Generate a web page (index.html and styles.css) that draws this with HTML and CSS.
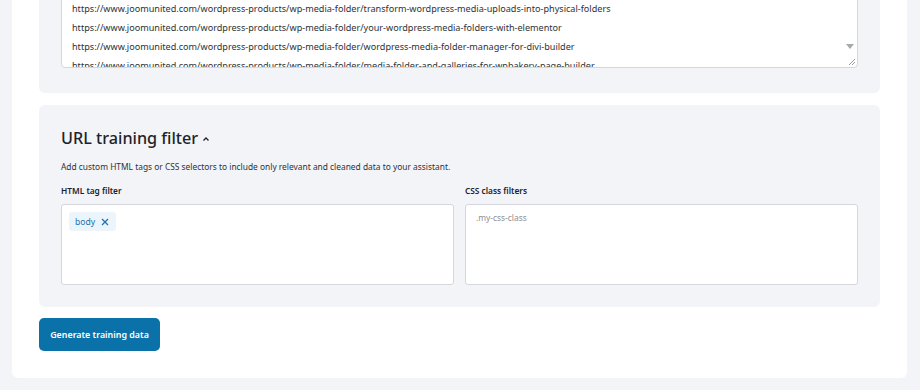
FILE: index.html
```html
<!DOCTYPE html>
<html>
<head>
<meta charset="utf-8">
<link rel="stylesheet" href="styles.css">
</head>
<body>
<div class="card">
  <section class="panel panel-urls">
    <div class="url-box">
      <div class="url-lines">
        <div class="url">https://www.joomunited.com/wordpress-products/wp-media-folder/transform-wordpress-media-uploads-into-physical-folders</div>
        <div class="url">https://www.joomunited.com/wordpress-products/wp-media-folder/your-wordpress-media-folders-with-elementor</div>
        <div class="url">https://www.joomunited.com/wordpress-products/wp-media-folder/wordpress-media-folder-manager-for-divi-builder</div>
        <div class="url">https://www.joomunited.com/wordpress-products/wp-media-folder/media-folder-and-galleries-for-wpbakery-page-builder</div>
      </div>
      <div class="scrollbar">
        <span class="arrow-down"></span>
        <svg class="grip" width="10" height="10" viewBox="0 0 10 10"><path d="M9 3 L3 9 M9 6 L6 9" stroke="#999" stroke-width="1"/></svg>
      </div>
    </div>
  </section>

  <section class="panel panel-filter">
    <h2 class="title">URL training filter <svg class="chev" width="8" height="6" viewBox="0 0 8 6"><path d="M1.5 4.5 L4 2 L6.5 4.5" fill="none" stroke="#1d2327" stroke-width="1.3"/></svg></h2>
    <p class="desc">Add custom HTML tags or CSS selectors to include only relevant and cleaned data to your assistant.</p>
    <div class="fields">
      <div class="field">
        <label class="label">HTML tag filter</label>
        <div class="input">
          <span class="chip">body <svg width="8" height="8" viewBox="0 0 8 8"><path d="M1 1 L7 7 M7 1 L1 7" stroke="#2271b1" stroke-width="1.3"/></svg></span>
        </div>
      </div>
      <div class="field">
        <label class="label">CSS class filters</label>
        <div class="input"><span class="placeholder">.my-css-class</span></div>
      </div>
    </div>
  </section>

  <button class="btn">Generate training data</button>
</div>
</body>
</html>
```
FILE: styles.css
```css
* { box-sizing: border-box; }
html, body { margin: 0; padding: 0; }
body {
  background: #f3f4f8;
  font-family: "Noto Sans", "Open Sans", sans-serif;
  color: #1d2327;
  width: 920px;
  height: 390px;
  overflow: hidden;
}
.card {
  margin: -30px 0 0 12px;
  width: 895px;
  background: #fff;
  border-radius: 0 0 6px 6px;
  padding: 0 27px 27px;
}
.panel {
  background: #f3f4f8;
  border-radius: 6px;
  padding: 22px 22px 25px;
}
.panel-urls { padding-bottom: 25px; }
.url-box {
  position: relative;
  height: 76px;
  background: #fff;
  border: 1px solid #d5d7dc;
  border-radius: 4px;
  overflow: hidden;
  padding: 6px 18px 0 10px;
}
.url {
  font-size: 9.1px;
  line-height: 19px;
  color: #2c3338;
  white-space: nowrap;
}
.scrollbar {
  position: absolute;
  right: 0;
  top: 0;
  bottom: 0;
  width: 14px;
}
.arrow-down {
  position: absolute;
  right: 3px;
  top: 51px;
  width: 0;
  height: 0;
  border-left: 4px solid transparent;
  border-right: 4px solid transparent;
  border-top: 5px solid #a7aaad;
}
.grip {
  position: absolute;
  right: 1px;
  bottom: 1px;
}
.panel-filter {
  margin-top: 12px;
  padding: 21px 22px 22px;
}
.title {
  margin: 0;
  font-size: 16.2px;
  font-weight: 500;
  line-height: 24px;
  display: flex;
  align-items: center;
  gap: 4px;
}
.chev { margin-top: 1px; }
.desc {
  margin: 11px 0 0;
  font-size: 8.4px;
  line-height: 12px;
  color: #2c3338;
}
.fields {
  display: grid;
  grid-template-columns: 1fr 1fr;
  gap: 11px;
  margin-top: 12px;
}
.label {
  display: block;
  font-size: 8.3px;
  font-weight: 600;
  line-height: 12px;
  color: #1d2327;
}
.input {
  margin-top: 7px;
  height: 81px;
  background: #fff;
  border: 1px solid #d5d7dc;
  border-radius: 3px;
  padding: 7px 7px;
  display: flex;
  align-items: flex-start;
}
.chip {
  display: inline-flex;
  align-items: center;
  gap: 6px;
  height: 19px;
  padding: 0 7px 0 6px;
  background: #ecf5fc;
  border-radius: 3px;
  color: #2271b1;
  font-size: 8.6px;
}
.placeholder {
  display: block;
  margin: 0 3px;
  line-height: 12px;
  color: #8c8f94;
  font-size: 8.4px;
}
.btn {
  margin-top: 11px;
  height: 33px;
  width: 121px;
  background: #0a72a8;
  color: #fff;
  border: none;
  border-radius: 5px;
  font-family: "Noto Sans", "Open Sans", sans-serif;
  font-size: 8.9px;
  font-weight: 600;
  padding: 0;
}
```
